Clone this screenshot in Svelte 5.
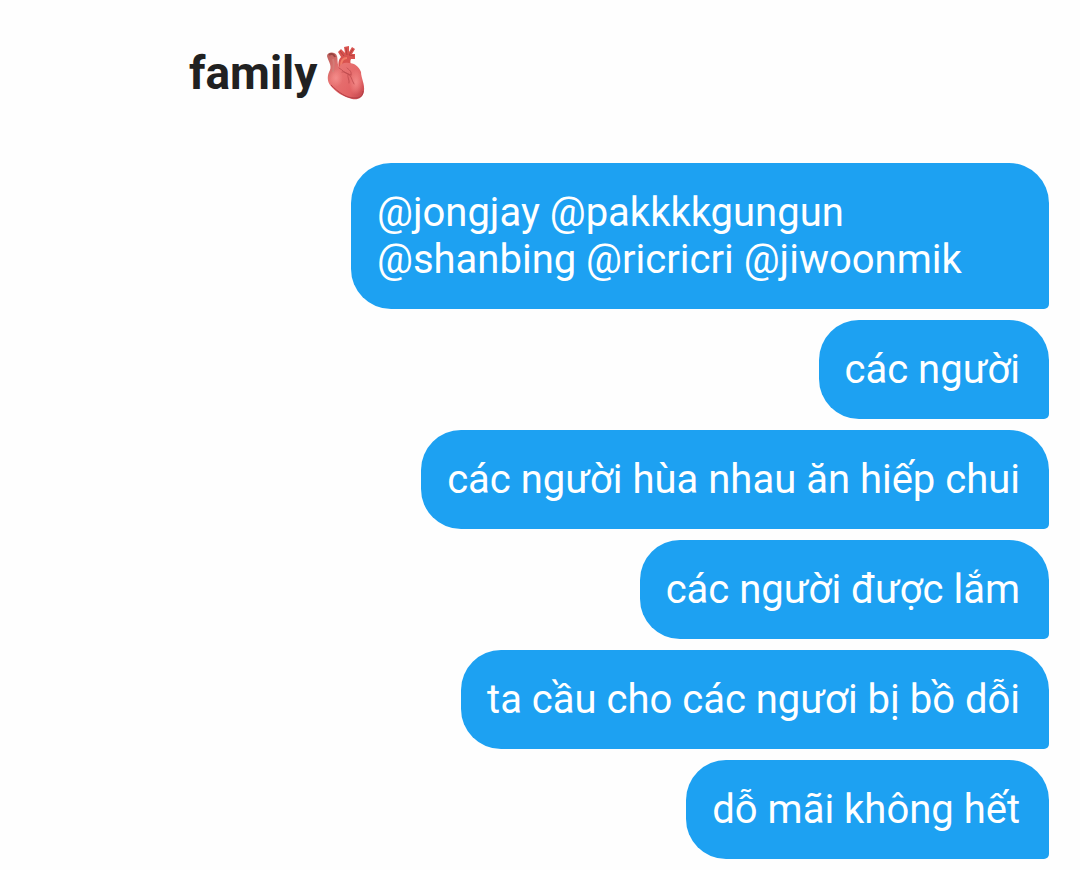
<script lang="ts">
  interface Message {
    id: number;
    text: string;
  }

  const messages: Message[] = [
    { id: 1, text: '@jongjay @pakkkkgungun @shanbing @ricricri @jiwoonmik' },
    { id: 2, text: 'các người' },
    { id: 3, text: 'các người hùa nhau ăn hiếp chui' },
    { id: 4, text: 'các người được lắm' },
    { id: 5, text: 'ta cầu cho các ngươi bị bồ dỗi' },
    { id: 6, text: 'dỗ mãi không hết' },
  ];
</script>

<main class="chat">
  <header class="header">
    <h1 class="title">family</h1>
    <svg class="heart" viewBox="0 0 38 54" role="img" aria-label="heart">
      <defs>
        <linearGradient id="muscle" x1="0" y1="0" x2="1" y2="1">
          <stop offset="0" stop-color="#b9605c" />
          <stop offset="0.35" stop-color="#e87473" />
          <stop offset="0.75" stop-color="#e26264" />
          <stop offset="1" stop-color="#bd4148" />
        </linearGradient>
        <radialGradient id="shine" cx="0.5" cy="0.5" r="0.5">
          <stop offset="0" stop-color="#f99895" stop-opacity="0.7" />
          <stop offset="1" stop-color="#f99895" stop-opacity="0" />
        </radialGradient>
      </defs>
      <!-- aorta and its branches -->
      <path
        d="M12 23C11 19 11 14 14 11L11 6L14 3L18 7L17 1L22 0L22 6L25 1L28 3L25 8L28 8L28 13L24 13C23 15 23 17 25 20Z"
        fill="#d9534f"
      />
      <path d="M13 5L17 10M19 2L20 9M26 3L22 9L27 10" fill="none" stroke="#b5423f" stroke-width="1" />
      <path d="M14 20C14 15 16 12 20 12" fill="none" stroke="#f07b66" stroke-width="2" />
      <!-- vena cava and muscle -->
      <path
        d="M0 10C0 6 8 5 10 10C11 14 10 17 12 21C14 17 18 16 22 17C28 17 32 21 34 26C34 32 38 38 37 45C36 52 31 54 25 53C17 51 8 46 3 39C0 35 0 29 3 24C5 19 1 15 0 10Z"
        fill="url(#muscle)"
      />
      <path d="M2 9C4 7 7 8 8 11" fill="none" stroke="#984341" stroke-width="2" />
      <path d="M6 13C8 18 6 22 6 26" fill="none" stroke="#d37b76" stroke-width="2" />
      <ellipse cx="9" cy="32" rx="7" ry="9" fill="url(#shine)" />
      <ellipse cx="29" cy="36" rx="7" ry="13" fill="url(#shine)" />
      <path
        d="M12 22C16 24 17 27 21 28C25 30 24 33 27 38M15 26C18 25 20 28 24 29M21 28C20 32 23 34 22 37M20 22C22 24 25 25 24 29"
        fill="none"
        stroke="#bd4a4c"
        stroke-width="0.8"
        stroke-linecap="round"
      />
      <path d="M4 39C11 46 19 52 27 52C33 52 36 50 36 45" fill="none" stroke="#b33f46" stroke-width="1" />
    </svg>
  </header>

  <ul class="messages">
    {#each messages as message (message.id)}
      <li class="bubble">{message.text}</li>
    {/each}
  </ul>
</main>

<style>
  :global(body) {
    margin: 0;
    background-color: #fefefe;
  }

  .chat {
    display: flex;
    flex-direction: column;
    gap: 58px;
    padding: 41px 31px 9px;
    font-family: Roboto, 'Noto Sans', sans-serif;
  }

  .header {
    display: flex;
    align-items: center;
    gap: 10px;
    padding-left: 158px;
  }

  .title {
    margin: 0;
    font-size: 46px;
    line-height: 64px;
    font-weight: 700;
    color: #212121;
  }

  .heart {
    width: 38px;
    height: 54px;
  }

  .messages {
    display: flex;
    flex-direction: column;
    align-items: flex-end;
    gap: 11px;
    margin: 0;
    padding: 0;
    list-style: none;
  }

  .bubble {
    box-sizing: border-box;
    max-width: 698px;
    padding: 26px 29px 26px 26px;
    border-radius: 40px 40px 5px 40px;
    background-color: #1da1f2;
    color: #fff;
    font-size: 40px;
    line-height: 47px;
  }
</style>
